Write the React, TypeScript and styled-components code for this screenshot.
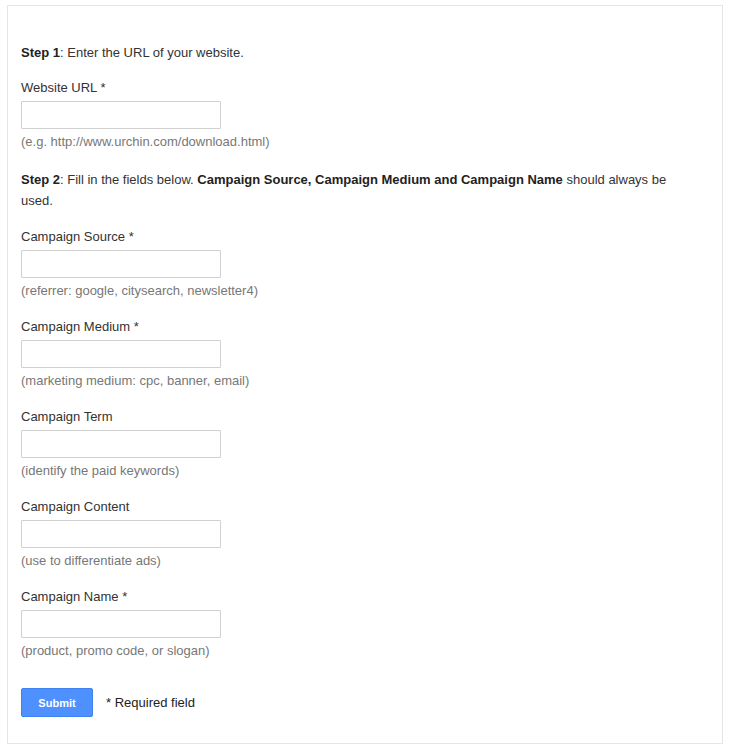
import styled, { createGlobalStyle } from 'styled-components';

const GlobalStyle = createGlobalStyle`
    body {
        margin: 0;
        background: #ffffff;
        font-family: "Liberation Sans", Arial, sans-serif;
        font-size: 13px;
        color: #333333;
    }
`;

type Field = {
    label: string;
    required?: boolean;
    hint: string;
};

const fields: Field[] = [
    { label: 'Campaign Source', required: true, hint: '(referrer: google, citysearch, newsletter4)' },
    { label: 'Campaign Medium', required: true, hint: '(marketing medium: cpc, banner, email)' },
    { label: 'Campaign Term', hint: '(identify the paid keywords)' },
    { label: 'Campaign Content', hint: '(use to differentiate ads)' },
    { label: 'Campaign Name', required: true, hint: '(product, promo code, or slogan)' },
];

const App = () => {
    return (
        <>
            <GlobalStyle />
            <Panel>
                <StepText $top={36}>
                    <b>Step 1</b>: Enter the URL of your website.
                </StepText>
                <FieldGroup $top={14}>
                    <Label>Website URL *</Label>
                    <Input type="text" />
                    <Hint>(e.g. http://www.urchin.com/download.html)</Hint>
                </FieldGroup>
                <StepText $top={17}>
                    <b>Step 2</b>: Fill in the fields below.{' '}
                    <b>Campaign Source, Campaign Medium and Campaign Name</b> should always be used.
                </StepText>
                {fields.map((f) => (
                    <FieldGroup key={f.label} $top={15}>
                        <Label>
                            {f.label}
                            {f.required && ' *'}
                        </Label>
                        <Input type="text" />
                        <Hint>{f.hint}</Hint>
                    </FieldGroup>
                ))}
                <Actions>
                    <SubmitBtn type="button">Submit</SubmitBtn>
                    <Required>* Required field</Required>
                </Actions>
            </Panel>
        </>
    );
};

const Panel = styled.div`
    margin: 5px 9px 0 7px;
    border: 1px solid #e5e5e5;
    padding: 0 13px 26px 13px;
`;

const StepText = styled.p<{ $top: number }>`
    margin: ${(p) => p.$top}px 0 0 0;
    line-height: 21px;
    max-width: 670px;
    color: #333333;

    b {
        color: #222222;
    }
`;

const FieldGroup = styled.div<{ $top: number }>`
    margin-top: ${(p) => p.$top}px;
    display: flex;
    flex-direction: column;
    align-items: flex-start;
`;

const Label = styled.label`
    line-height: 21px;
    margin-bottom: 3px;
    color: #333333;
`;

const Input = styled.input`
    box-sizing: border-box;
    width: 200px;
    height: 28px;
    margin: 0;
    border: 1px solid #d0d0d0;
    border-radius: 1px;
    background: #ffffff;
    font: inherit;
    padding: 0 6px;
`;

const Hint = styled.div`
    margin-top: 2px;
    line-height: 21px;
    color: #777777;
`;

const Actions = styled.div`
    margin-top: 27px;
    display: flex;
    align-items: center;
    gap: 13px;
`;

const SubmitBtn = styled.button`
    box-sizing: border-box;
    width: 72px;
    height: 29px;
    background: #4d90fe;
    border: 1px solid #3d82f0;
    border-radius: 2px;
    color: #ffffff;
    font-family: "Liberation Sans", Arial, sans-serif;
    font-weight: bold;
    font-size: 11px;
    padding: 0;
`;

const Required = styled.span`
    color: #222222;
`;

export default App;
